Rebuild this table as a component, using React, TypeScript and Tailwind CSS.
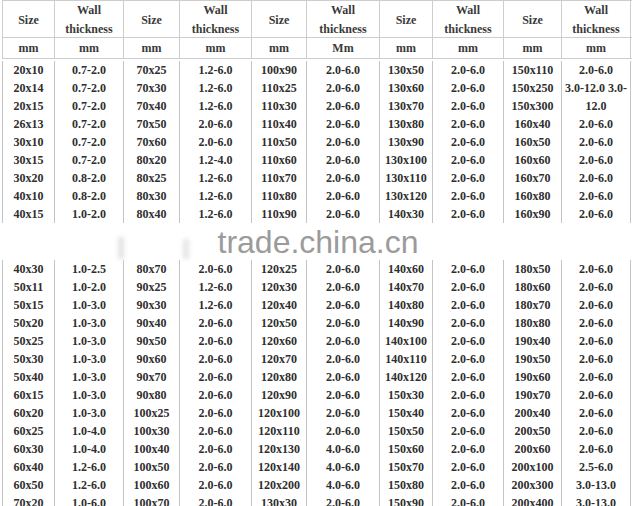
const topRows: string[][] = [
  ["20x10", "0.7-2.0", "70x25", "1.2-6.0", "100x90", "2.0-6.0", "130x50", "2.0-6.0", "150x110", "2.0-6.0"],
  ["20x14", "0.7-2.0", "70x30", "1.2-6.0", "110x25", "2.0-6.0", "130x60", "2.0-6.0", "150x250", "3.0-12.0 3.0-"],
  ["20x15", "0.7-2.0", "70x40", "1.2-6.0", "110x30", "2.0-6.0", "130x70", "2.0-6.0", "150x300", "12.0"],
  ["26x13", "0.7-2.0", "70x50", "2.0-6.0", "110x40", "2.0-6.0", "130x80", "2.0-6.0", "160x40", "2.0-6.0"],
  ["30x10", "0.7-2.0", "70x60", "2.0-6.0", "110x50", "2.0-6.0", "130x90", "2.0-6.0", "160x50", "2.0-6.0"],
  ["30x15", "0.7-2.0", "80x20", "1.2-4.0", "110x60", "2.0-6.0", "130x100", "2.0-6.0", "160x60", "2.0-6.0"],
  ["30x20", "0.8-2.0", "80x25", "1.2-6.0", "110x70", "2.0-6.0", "130x110", "2.0-6.0", "160x70", "2.0-6.0"],
  ["40x10", "0.8-2.0", "80x30", "1.2-6.0", "110x80", "2.0-6.0", "130x120", "2.0-6.0", "160x80", "2.0-6.0"],
  ["40x15", "1.0-2.0", "80x40", "1.2-6.0", "110x90", "2.0-6.0", "140x30", "2.0-6.0", "160x90", "2.0-6.0"],
];

const bottomRows: string[][] = [
  ["40x30", "1.0-2.5", "80x70", "2.0-6.0", "120x25", "2.0-6.0", "140x60", "2.0-6.0", "180x50", "2.0-6.0"],
  ["50x11", "1.0-2.0", "90x25", "1.2-6.0", "120x30", "2.0-6.0", "140x70", "2.0-6.0", "180x60", "2.0-6.0"],
  ["50x15", "1.0-3.0", "90x30", "1.2-6.0", "120x40", "2.0-6.0", "140x80", "2.0-6.0", "180x70", "2.0-6.0"],
  ["50x20", "1.0-3.0", "90x40", "2.0-6.0", "120x50", "2.0-6.0", "140x90", "2.0-6.0", "180x80", "2.0-6.0"],
  ["50x25", "1.0-3.0", "90x50", "2.0-6.0", "120x60", "2.0-6.0", "140x100", "2.0-6.0", "190x40", "2.0-6.0"],
  ["50x30", "1.0-3.0", "90x60", "2.0-6.0", "120x70", "2.0-6.0", "140x110", "2.0-6.0", "190x50", "2.0-6.0"],
  ["50x40", "1.0-3.0", "90x70", "2.0-6.0", "120x80", "2.0-6.0", "140x120", "2.0-6.0", "190x60", "2.0-6.0"],
  ["60x15", "1.0-3.0", "90x80", "2.0-6.0", "120x90", "2.0-6.0", "150x30", "2.0-6.0", "190x70", "2.0-6.0"],
  ["60x20", "1.0-3.0", "100x25", "2.0-6.0", "120x100", "2.0-6.0", "150x40", "2.0-6.0", "200x40", "2.0-6.0"],
  ["60x25", "1.0-4.0", "100x30", "2.0-6.0", "120x110", "2.0-6.0", "150x50", "2.0-6.0", "200x50", "2.0-6.0"],
  ["60x30", "1.0-4.0", "100x40", "2.0-6.0", "120x130", "4.0-6.0", "150x60", "2.0-6.0", "200x60", "2.0-6.0"],
  ["60x40", "1.2-6.0", "100x50", "2.0-6.0", "120x140", "4.0-6.0", "150x70", "2.0-6.0", "200x100", "2.5-6.0"],
  ["60x50", "1.2-6.0", "100x60", "2.0-6.0", "120x200", "4.0-6.0", "150x80", "2.0-6.0", "200x300", "3.0-13.0"],
  ["70x20", "1.0-6.0", "100x70", "2.0-6.0", "130x30", "2.0-6.0", "150x90", "2.0-6.0", "200x400", "3.0-13.0"],
];

const units = ["mm", "mm", "mm", "mm", "mm", "Mm", "mm", "mm", "mm", "mm"];

const serif = { fontFamily: '"Liberation Serif", "Times New Roman", serif' };

const rowGrid =
  "grid w-[630px] grid-cols-[52px_69px_56px_72px_55px_73px_53px_71px_58px_70px]";

function Cell({ children, last, line = "border-[#c4c4c4]" }: { children: React.ReactNode; last: boolean; line?: string }) {
  return (
    <div
      className={`flex items-center justify-center whitespace-nowrap border-l text-center ${line} ${last ? "border-r" : ""}`}
      style={serif}
    >
      {children}
    </div>
  );
}

function DataRows({ rows }: { rows: string[][] }) {
  return (
    <div className="text-[12px] font-bold leading-[18px] text-[#2e2e2e]">
      {rows.map((row, r) => (
        <div key={r} className={`${rowGrid} h-[18px]`}>
          {row.map((cell, c) => (
            <Cell key={c} last={c === row.length - 1}>
              {cell}
            </Cell>
          ))}
        </div>
      ))}
    </div>
  );
}

export default function App() {
  return (
    <div className="h-[506px] w-[634px] overflow-hidden bg-white pl-[2px]" style={serif}>
      <div className="text-[12px] font-bold text-[#3a3a3a]">
        <div className={`${rowGrid} h-[38px] border-y border-[#cdcdcd] leading-[19px]`}>
          {units.map((_, i) => (
            <Cell key={i} last={i === 9} line="border-[#cdcdcd]">
              {i % 2 === 0 ? (
                "Size"
              ) : (
                <span>
                  Wall
                  <br />
                  thickness
                </span>
              )}
            </Cell>
          ))}
        </div>
        <div className={`${rowGrid} h-[21px] border-b border-[#cdcdcd]`}>
          {units.map((u, i) => (
            <Cell key={i} last={i === 9} line="border-[#cdcdcd]">
              {u}
            </Cell>
          ))}
        </div>
      </div>

      <div className="pt-[2px]">
        <DataRows rows={topRows} />
      </div>

      <div className="relative flex h-[37px] items-center justify-center">
        <div className="absolute left-[116px] top-[14px] h-[22px] w-[6px] bg-[#e4e4e4] blur-[2px]" />
        <div className="absolute left-[181px] top-[16px] h-[20px] w-[6px] bg-[#e6e6e6] blur-[2px]" />
        <span
          className="text-[32px] leading-none text-[#9b9b9b]"
          style={{ fontFamily: '"Liberation Sans", Arial, sans-serif' }}
        >
          trade.china.cn
        </span>
      </div>

      <DataRows rows={bottomRows} />
    </div>
  );
}
